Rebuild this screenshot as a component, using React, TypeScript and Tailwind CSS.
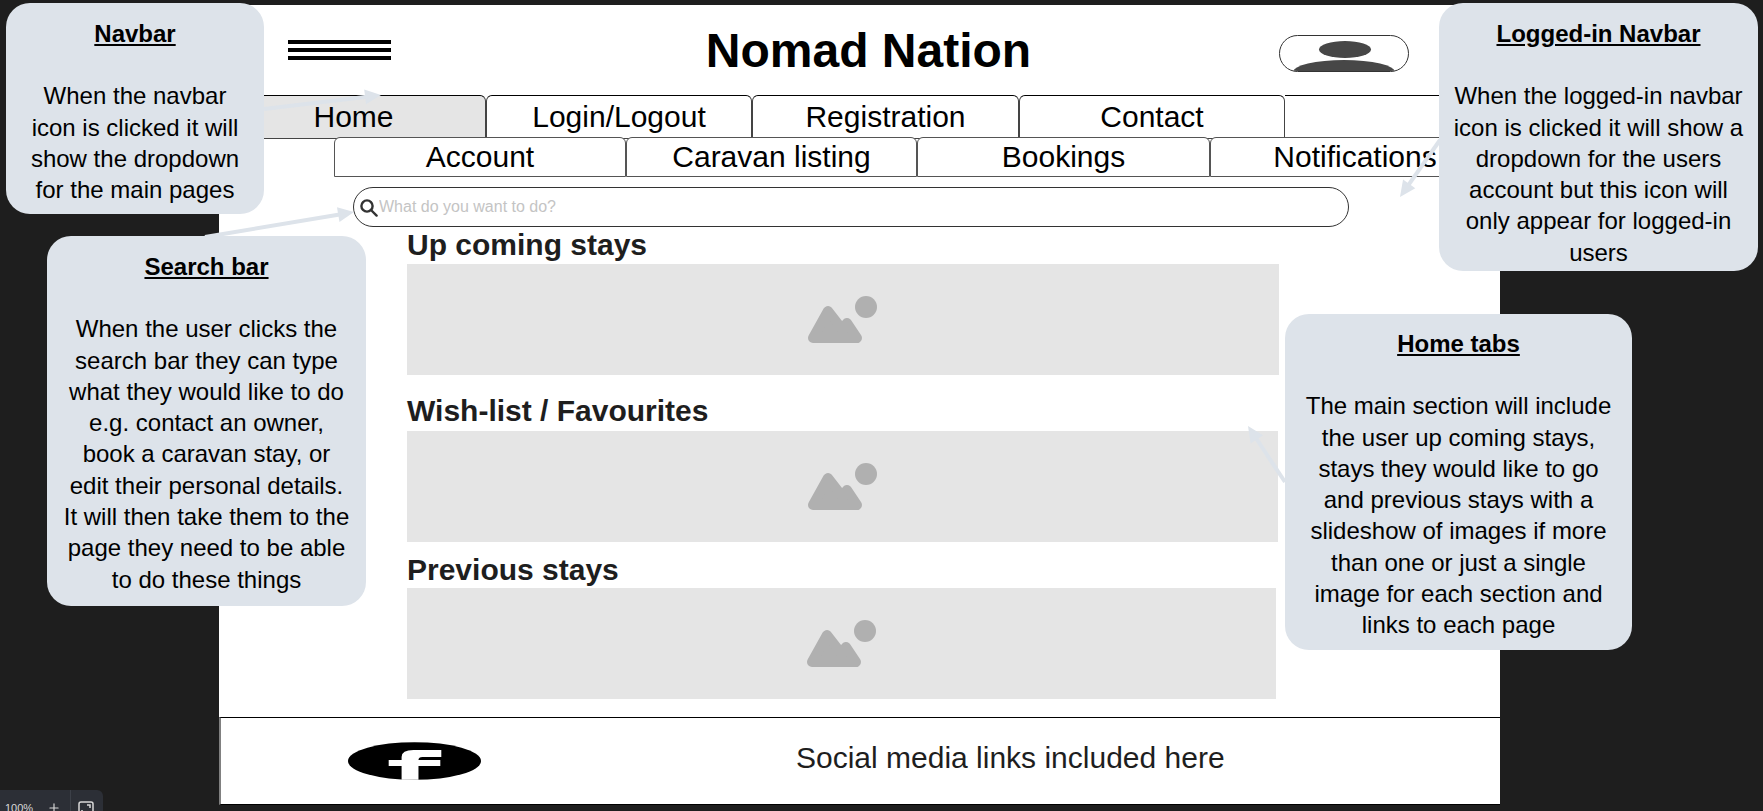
import React from 'react';
import { Plus } from 'lucide-react';

const topTabs = [
  { label: 'Home', width: 'w-[265px]', active: true },
  { label: 'Login/Logout', width: 'w-[266px]', active: false },
  { label: 'Registration', width: 'w-[267px]', active: false },
  { label: 'Contact', width: 'w-[266px]', active: false },
];

const userTabs = [
  { label: 'Account', width: 'w-[292px]' },
  { label: 'Caravan listing', width: 'w-[291px]' },
  { label: 'Bookings', width: 'w-[293px]' },
  { label: 'Notifications', width: 'w-[290px]' },
];

const callouts = [
  {
    title: 'Navbar',
    box: 'left-[6px] top-[3px] w-[258px] h-[211px] pt-[15px]',
    lines: ['When the navbar', 'icon is clicked it will', 'show the dropdown', 'for the main pages'],
  },
  {
    title: 'Search bar',
    box: 'left-[47px] top-[236px] w-[319px] h-[370px] pt-[15px]',
    lines: [
      'When the user clicks the',
      'search bar they can type',
      'what they would like to do',
      'e.g. contact an owner,',
      'book a caravan stay, or',
      'edit their personal details.',
      'It will then take them to the',
      'page they need to be able',
      'to do these things',
    ],
  },
  {
    title: 'Logged-in Navbar',
    box: 'left-[1439px] top-[3px] w-[319px] h-[268px] pt-[15px]',
    lines: [
      'When the logged-in navbar',
      'icon is clicked it will show a',
      'dropdown for the users',
      'account but this icon will',
      'only appear for logged-in',
      'users',
    ],
  },
  {
    title: 'Home tabs',
    box: 'left-[1285px] top-[314px] w-[347px] h-[336px] pt-[14px]',
    lines: [
      'The main section will include',
      'the user up coming stays,',
      'stays they would like to go',
      'and previous stays with a',
      'slideshow of images if more',
      'than one or just a single',
      'image for each section and',
      'links to each page',
    ],
  },
];

const arrows = [
  { x1: 264, y1: 109, x2: 381, y2: 95 },
  { x1: 205, y1: 237, x2: 354, y2: 212 },
  { x1: 1440, y1: 140, x2: 1400, y2: 197 },
  { x1: 1285, y1: 482, x2: 1248, y2: 426 },
];

const ImageIcon = () => (
  <svg width="70" height="48" viewBox="0 0 70 48" fill="#b0b0b0">
    <circle cx="58" cy="11" r="11" />
    <path
      d="M5 42 L20 15 L34 33 L39 27 L49 42 Z"
      stroke="#b0b0b0"
      strokeWidth="10"
      strokeLinejoin="round"
    />
  </svg>
);

const Arrows = () => (
  <svg className="absolute left-0 top-0 pointer-events-none" width="1763" height="811">
    {arrows.map((a) => {
      const angle = (Math.atan2(a.y2 - a.y1, a.x2 - a.x1) * 180) / Math.PI;
      const length = Math.hypot(a.x2 - a.x1, a.y2 - a.y1);
      return (
        <g key={a.x1} transform={`translate(${a.x1} ${a.y1}) rotate(${angle})`} fill="#dde3ea">
          <rect x="0" y="-2" width={length - 10} height="4" />
          <path d={`M${length} 0 L${length - 16} -7.5 L${length - 16} 7.5 Z`} />
        </g>
      );
    })}
  </svg>
);

export default function App() {
  return (
    <div className="relative w-full h-[811px] overflow-hidden bg-[#1e1e1e] text-black [font-family:'Liberation_Sans',Arial,sans-serif]">
      {/* wireframe frame */}
      <div className="absolute left-[219px] top-[5px] w-[1281px] h-[800px] bg-white flex flex-col overflow-hidden">
        <header className="h-[90px] flex items-center shrink-0">
          <div className="ml-[69px] w-[103px] flex flex-col gap-[4px]">
            <div className="h-[4px] bg-black" />
            <div className="h-[4px] bg-black" />
            <div className="h-[4px] bg-black" />
          </div>
          <h1 className="ml-[67px] mt-[1px] w-[821px] text-center text-[48px] leading-none font-bold">Nomad Nation</h1>
          <div className="relative mt-[6px] w-[130px] h-[37px] rounded-full border border-[#333] overflow-hidden">
            <div className="absolute left-[39px] top-[5px] w-[52px] h-[17px] rounded-[50%] bg-[#474747]" />
            <div className="absolute left-[13px] top-[24px] w-[102px] h-[24px] rounded-t-[50%] bg-[#474747]" />
          </div>
        </header>

        <nav className="flex h-[44px] pl-[2px] shrink-0">
          {topTabs.map((tab) => (
            <div
              key={tab.label}
              className={`${tab.width} flex items-center justify-center pb-[1px] text-[30px] border border-[#444] border-t-black rounded-t-[6px] ${tab.active ? 'bg-[#e5e5e5]' : 'bg-white'}`}
            >
              {tab.label}
            </div>
          ))}
          <div className="flex-1 border-t border-black" />
        </nav>

        <nav className="relative flex h-[40px] -mt-[2px] pl-[115px] shrink-0">
          {userTabs.map((tab) => (
            <div
              key={tab.label}
              className={`${tab.width} shrink-0 flex items-center justify-center pb-[2px] text-[30px] bg-white border border-[#555] rounded-t-[6px]`}
            >
              {tab.label}
            </div>
          ))}
        </nav>

        <div className="mt-[10px] ml-[134px] w-[996px] h-[40px] flex items-center rounded-full border border-[#333] bg-white shrink-0">
          <svg className="ml-[6px] mt-[1px] shrink-0" width="18" height="18" viewBox="0 0 18 18" fill="none" stroke="#333" strokeWidth="2.4" strokeLinecap="round">
            <circle cx="7" cy="7" r="5.6" />
            <path d="M11 11 L16.6 16.6" />
          </svg>
          <input
            readOnly
            placeholder="What do you want to do?"
            className="ml-[1px] -mt-[1px] flex-1 bg-transparent text-[16px] outline-none placeholder:text-[#c4c4c4]"
          />
        </div>

        <main className="ml-[188px] flex flex-col text-[#1e1e1e]">
          <h2 className="mt-[1px] text-[30px] leading-[34px] font-bold">Up coming stays</h2>
          <div className="mt-[2px] w-[872px] h-[111px] bg-[#e5e5e5] flex items-center justify-center">
            <ImageIcon />
          </div>
          <h2 className="mt-[19px] text-[30px] leading-[34px] font-bold">Wish-list / Favourites</h2>
          <div className="mt-[3px] w-[871px] h-[111px] bg-[#e5e5e5] flex items-center justify-center">
            <ImageIcon />
          </div>
          <h2 className="mt-[11px] text-[30px] leading-[34px] font-bold">Previous stays</h2>
          <div className="mt-[1px] w-[869px] h-[111px] bg-[#e5e5e5] flex items-center justify-center">
            <ImageIcon />
          </div>
        </main>

        <footer className="mt-auto h-[88px] flex items-center border-t border-b border-t-black border-b-black border-l-2 border-l-[#808080] shrink-0">
          <svg className="ml-[127px] shrink-0" width="133" height="38" viewBox="0 0 134 38">
            <ellipse cx="67" cy="19" rx="67" ry="19" fill="#000" />
            <path
              d="M54 38 V24 H41 V18 H54 V15 Q54 8 66 8 H94 V15 H75 Q71 15 71 18 H93 V24 H71 V38 Z"
              fill="#fff"
            />
          </svg>
          <p className="ml-[315px] mb-[7px] text-[30px] text-[#1e1e1e] whitespace-nowrap">Social media links included here</p>
        </footer>
      </div>

      <Arrows />

      {callouts.map((note) => (
        <section
          key={note.title}
          className={`absolute ${note.box} rounded-[24px] bg-[#dde3ea] text-center text-[24px] leading-[31.3px] text-black`}
        >
          <h3 className="font-bold underline">{note.title}</h3>
          <div className="mt-[31px]">
            {note.lines.map((line) => (
              <p key={line} className="whitespace-nowrap">{line}</p>
            ))}
          </div>
        </section>
      ))}

      {/* viewer zoom control, cut off by the window edge */}
      <div className="absolute left-0 top-[790px] w-[103px] h-[21px] overflow-hidden flex rounded-tr-[6px] bg-[#2c2f36] text-[#d8d8d8]">
        <div className="w-[71px] shrink-0 flex items-start border-r border-[#3c4048] pt-[11px]">
          <span className="ml-[5px] text-[11px] leading-[14px]">100%</span>
          <Plus size={14} strokeWidth={2} className="ml-[14px]" />
        </div>
        <svg className="ml-[7px] mt-[11px] shrink-0" width="16" height="16" viewBox="0 0 16 16" fill="none" stroke="#d8d8d8" strokeWidth="1.5">
          <rect x="1" y="1" width="14" height="14" rx="2" />
          <path d="M9 4 H12 V7 M7 12 H4 V9" />
        </svg>
      </div>
    </div>
  );
}
